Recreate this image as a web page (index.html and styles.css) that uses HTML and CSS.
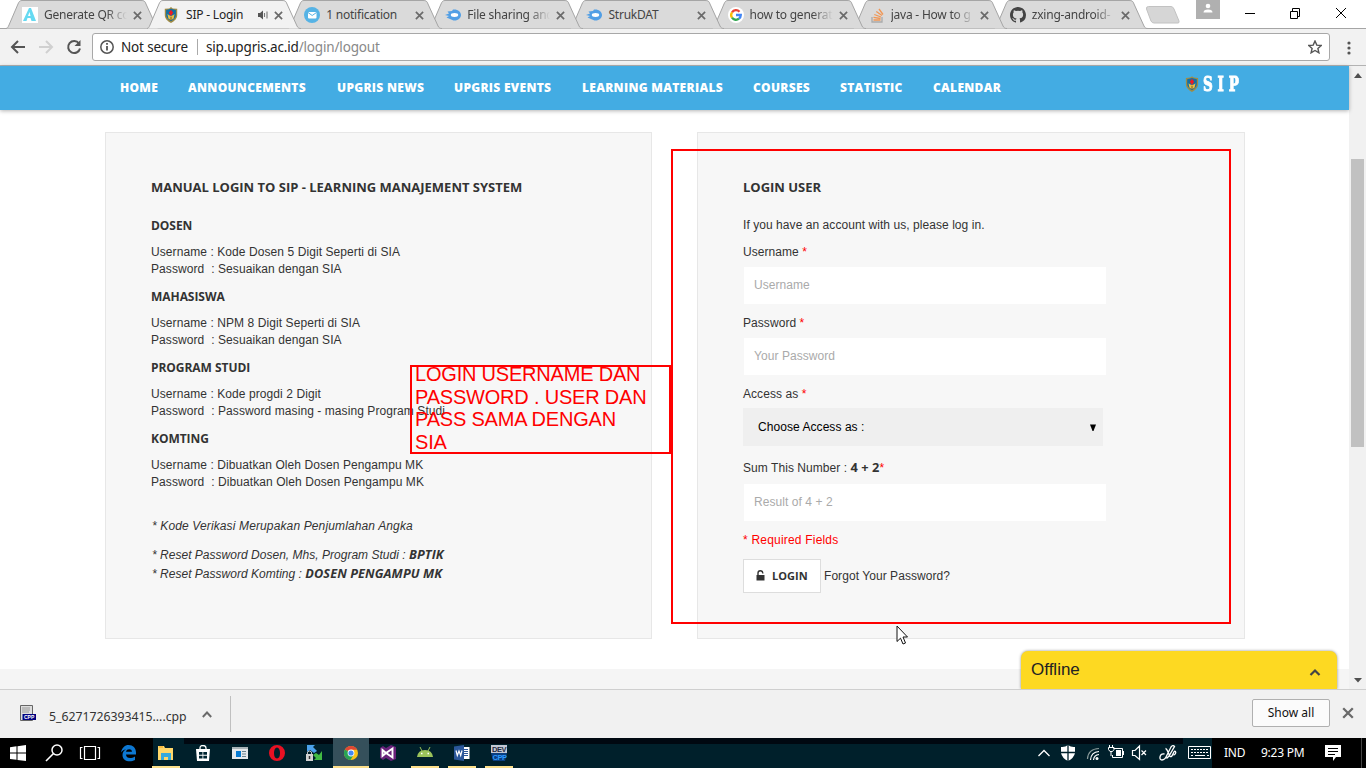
FILE: index.html
```html
<!DOCTYPE html>
<html lang="en">
<head>
<meta charset="utf-8">
<title>SIP - Login</title>
<link rel="stylesheet" href="styles.css">
</head>
<body>
<svg class="defs" width="0" height="0" aria-hidden="true">
  <defs>
    <symbol id="tabshape" viewBox="0 0 154 29"><path d="M0 28.5C2 28 2 27 3 25L12 4C13 1.5 14 .5 16 .5H135C138 .5 139 1 140 4L150 26C151 28 152 28.5 154 28.5" stroke="#a5a5a5"/></symbol>
    <symbol id="x" viewBox="0 0 10 10"><path d="M1 1L9 9M9 1L1 9" stroke="#6a6a6a" stroke-width="1.9" fill="none"/></symbol>
    <symbol id="crest" viewBox="0 0 16 18"><path d="M8 0L10 1.6 15 2V9C15 13 12 16 8 18 4 16 1 13 1 9V2L6 1.6Z" fill="#a08b45"/><path d="M8 2L13.5 3.5V9C13.500 12 11 14.500 8 16 5 14.500 2.500 12 2.500 9V3.500Z" fill="#146fa3"/><path d="M4 8Q8 12 12 8L11 13 8 15 5 13Z" fill="#e8bd45"/><path d="M8 3L10.500 6.500 8 10 5.500 6.500Z" fill="#ed1c24"/><path d="M8 11V15" stroke="#70531a"/></symbol>
    <symbol id="flame" viewBox="0 0 16 12"><path d="M0 6L4 4.500 2.500 2.500 7 2 8 .5C13 0 16 3 16 6S13 12 8.500 11.500L5 10 1.500 8.500 4 7Z" fill="#529fe5"/><ellipse cx="9.500" cy="6" rx="3.700" ry="1.900" fill="#fff"/></symbol>
  </defs>
</svg>

<header class="tabs">
  <div class="tab t1"><svg class="shape"><use href="#tabshape"/></svg>
    <svg class="fav" viewBox="0 0 16 16"><path fill="#fff" d="M0 0H16V16H0Z"/><path d="M1 14L7 1H9L14 14H9.500L8.500 11H5.500L4.500 14ZM6 9H8.500L7.500 5Z" fill="#66daf2"/></svg>
    <span class="ttl fade">Generate QR co</span><svg class="x"><use href="#x"/></svg></div>
  <div class="tab t2 active"><svg class="shape"><use href="#tabshape"/></svg>
    <svg class="fav"><use href="#crest"/></svg>
    <span class="ttl short">SIP - Login</span>
    <svg class="snd" viewBox="0 0 10 10"><path d="M0 3H2L5 .5V9.500L2 7H0Z" fill="#555"/><path d="M6.500 3V7M9 1.500V8.500" stroke="#777" stroke-width="1.100"/></svg>
    <svg class="x"><use href="#x"/></svg></div>
  <div class="tab t3"><svg class="shape"><use href="#tabshape"/></svg>
    <svg class="fav" viewBox="0 0 16 16"><circle cx="8" cy="8" r="8" fill="#56b3e5"/><rect x="4" y="5" width="8.500" height="6.500" rx="1" fill="#fff"/><path d="M4 5.500L8.200 8.500 12.500 5.500" fill="none" stroke="#56b3e5"/></svg>
    <span class="ttl">1 notification</span><svg class="x"><use href="#x"/></svg></div>
  <div class="tab t4"><svg class="shape"><use href="#tabshape"/></svg>
    <svg class="fav"><use href="#flame"/></svg>
    <span class="ttl fade">File sharing and</span><svg class="x"><use href="#x"/></svg></div>
  <div class="tab t5"><svg class="shape"><use href="#tabshape"/></svg>
    <svg class="fav"><use href="#flame"/></svg>
    <span class="ttl">StrukDAT</span><svg class="x"><use href="#x"/></svg></div>
  <div class="tab t6"><svg class="shape"><use href="#tabshape"/></svg>
    <svg class="fav" viewBox="0 0 16 16"><circle cx="8" cy="8" r="8" fill="#fff"/><g fill="none" stroke-width="2.300"><path d="M4 5.300A4.800 4.800 0 0 1 11.500 4.700" stroke="#ea4335"/><path d="M4 5.300A4.800 4.800 0 0 0 4 10.700" stroke="#fbbc05"/><path d="M4 10.700A4.800 4.800 0 0 0 11 11.700" stroke="#34a853"/><path d="M11 11.700A4.800 4.800 0 0 0 12.800 8H8" stroke="#4285f4"/></g></svg>
    <span class="ttl fade">how to generat</span><svg class="x"><use href="#x"/></svg></div>
  <div class="tab t7"><svg class="shape"><use href="#tabshape"/></svg>
    <svg class="fav" viewBox="0 0 16 16"><path d="M3 10V15H13V10" fill="none" stroke="#aaa" stroke-width="1.300"/><path d="M4.500 13H11.500M4.500 10.300L11.500 11.500M5.300 7.500L12 10M7.300 4.500L13 8.500M10 2L14 7.500" stroke="#f19654" stroke-width="1.300"/></svg>
    <span class="ttl fade">java - How to g</span><svg class="x"><use href="#x"/></svg></div>
  <div class="tab t8"><svg class="shape"><use href="#tabshape"/></svg>
    <svg class="fav" viewBox="0 0 16 16"><path fill="#444" d="M8 0C3.580 0 0 3.580 0 8c0 3.540 2.290 6.530 5.470 7.590.4.070.55-.17.55-.38v-1.490c-2.230.48-2.700-1.070-2.700-1.070-.36-.92-.89-1.170-.89-1.170-.73-.5.060-.49.060-.49.8.060 1.230.82 1.230.82.72 1.230 1.870.87 2.330.66.070-.52.280-.87.510-1.070-1.780-.2-3.640-.89-3.640-3.950 0-.87.310-1.590.82-2.150-.08-.2-.36-1.020.080-2.120 0 0 .67-.21 2.200.82a7.500 7.500 0 0 1 4 0c1.530-1.040 2.200-.82 2.200-.82.44 1.100.16 1.920.080 2.120.51.56.82 1.270.82 2.150 0 3.070-1.870 3.750-3.650 3.950.29.25.54.73.54 1.480v2.200c0 .21.150.46.550.38A8 8 0 0 0 16 8c0-4.420-3.580-8-8-8z"/></svg>
    <span class="ttl fade">zxing-android-</span><svg class="x"><use href="#x"/></svg></div>
  <svg class="newtab" viewBox="0 0 36 18"><path d="M3.500 .5H26Q28 .5 29 3L34 15Q34.500 17 33 17H9Q7 17 6 15L1.500 3Q1 .5 3.500 .5Z" fill="#d6d6d6" stroke="#c2c2c2"/></svg>
  <div class="person"><svg width="10" height="11" viewBox="0 0 10 11"><circle cx="5" cy="3" r="2.300" fill="#fff"/><path d="M.5 9.500Q.5 6.500 5 6.500T9.500 9.500Z" fill="#fff"/></svg></div>
  <svg class="winctl" width="102" height="28" fill="none" stroke="#000"><path d="M0 13.500H10M45.500 11.500H52.500V18.500H45.500ZM47.500 11V8.500H54.500V16.500H53M91 8L101 18M101 8L91 18"/></svg>
</header>

<div class="toolbar">
  <svg class="navicons" width="92" height="36" fill="none" stroke="#555" stroke-width="2"><path d="M25 18H12.500M18 12L12 18 18 24"/><path d="M39 18H51.500M46 12L52 18 46 24" stroke="#d0d0d0"/><path d="M79 14.500A6 6 0 1 0 80 19.500"/><path d="M80.500 11V17H74.500Z" fill="#555" stroke="none"/></svg>
  <div class="omnibox">
    <svg width="14" height="14" viewBox="0 0 14 14" fill="none" stroke="#555" stroke-width="1.500"><circle cx="7" cy="7" r="6.200"/><path d="M7 6V10.500M7 3V4.700" stroke-width="1.800"/></svg>
    <span class="sec">Not secure</span><i></i><span class="url">sip.upgris.ac.id<b>/login/logout</b></span>
    <svg class="star" width="14" height="14" viewBox="0 0 14 14" fill="none" stroke="#555" stroke-width="1.400"><path d="M7 1L8.800 5.100 13.200 5.500 9.900 8.400 10.900 12.800 7 10.500 3.100 12.800 4.100 8.400.8 5.500 5.200 5.100Z"/></svg>
  </div>
  <svg class="dots" width="4" height="14" fill="#555"><circle cx="2" cy="2" r="1.600"/><circle cx="2" cy="7" r="1.600"/><circle cx="2" cy="12" r="1.600"/></svg>
</div>

<div class="viewport">
  <div class="page">
    <nav class="menu">
      <a class="m1">HOME</a><a class="m2">ANNOUNCEMENTS</a><a class="m3">UPGRIS NEWS</a><a class="m4">UPGRIS EVENTS</a><a class="m5">LEARNING MATERIALS</a><a class="m6">COURSES</a><a class="m7">STATISTIC</a><a class="m8">CALENDAR</a>
      <div class="brand"><svg width="14" height="16" viewBox="0 0 16 18"><use href="#crest" width="16" height="18"/></svg><span>SIP</span></div>
    </nav>
    <main class="cols">
      <section class="panel manual">
        <h2>MANUAL LOGIN TO SIP - LEARNING MANAJEMENT SYSTEM</h2>
        <h3>DOSEN</h3>
        <p>Username : Kode Dosen 5 Digit Seperti di SIA<br>Password &nbsp;: Sesuaikan dengan SIA</p>
        <h3>MAHASISWA</h3>
        <p>Username : NPM 8 Digit Seperti di SIA<br>Password &nbsp;: Sesuaikan dengan SIA</p>
        <h3>PROGRAM STUDI</h3>
        <p>Username : Kode progdi 2 Digit<br>Password &nbsp;: Password masing - masing Program Studi</p>
        <h3>KOMTING</h3>
        <p>Username : Dibuatkan Oleh Dosen Pengampu MK<br>Password &nbsp;: Dibuatkan Oleh Dosen Pengampu MK</p>
        <div class="notes">
          <p>* Kode Verikasi Merupakan Penjumlahan Angka</p>
          <p class="reset">* Reset Password Dosen, Mhs, Program Studi : <b>BPTIK</b><br>* Reset Password Komting : <b>DOSEN PENGAMPU MK</b></p>
        </div>
      </section>
      <section class="panel login">
        <h2>LOGIN USER</h2>
        <p class="intro">If you have an account with us, please log in.</p>
        <label>Username <em>*</em></label>
        <div class="field">Username</div>
        <label>Password <em>*</em></label>
        <div class="field">Your Password</div>
        <label>Access as <em>*</em></label>
        <div class="select"><span>Choose Access as :</span><svg width="6" height="7"><path d="M0 .5H6L3.500 7H2.500Z"/></svg></div>
        <label>Sum This Number : <b>4 + 2</b><em>*</em></label>
        <div class="field">Result of 4 + 2</div>
        <p class="req">* Required Fields</p>
        <div class="act"><div class="btn"><svg width="9" height="11" viewBox="0 0 9 11"><path d="M.5 5H8.500V10.500H.5Z" fill="#333"/><path d="M2 5V3Q2 .8 4.300 .8T6.800 3V3.500" fill="none" stroke="#333" stroke-width="1.400"/></svg><span>LOGIN</span></div><span class="forgot">Forgot Your Password?</span></div>
      </section>
    </main>
    <div class="foot"></div>
    <div class="chat"><span>Offline</span><svg width="12" height="8"><path d="M1.500 7L6 2.500 10.500 7" fill="none" stroke="#444" stroke-width="2.200"/></svg></div>
  </div>
  <div class="scroll"><svg width="8" height="5"><path d="M0 5L4 0 8 5Z" fill="#505050"/></svg><div class="thumb"></div><svg width="8" height="5"><path d="M0 0H8L4 4.500Z" fill="#505050"/></svg></div>
</div>

<div class="shelf">
  <svg class="cpp" width="16" height="16"><path d="M.5 .5H12.500V15.500H.5Z" fill="#ddd" stroke="#666"/><path d="M2 3H10M2 5H10M2 7H9" stroke="#999"/><path d="M2.500 9H16V15H2.500Z" fill="#000080"/><text x="4" y="14" class="cpptext">CPP</text></svg>
  <span class="file">5_6271726393415....cpp</span>
  <svg class="up" width="10" height="7"><path d="M.8 6L5 1.500 9.200 6" fill="none" stroke="#6a6a6a" stroke-width="1.900"/></svg>
  <i></i>
  <div class="all">Show all</div>
  <svg class="x2"><use href="#x"/></svg>
</div>

<footer class="taskbar">
  <div class="start"><svg width="153" height="30" fill="none" stroke="#fff"><path fill="#fff" stroke="none" d="M10 9.200L16.500 8.300V14.500H10ZM17.500 8.200L26 7V14.500H17.500ZM10 15.500H16.500V21.800L10 20.900ZM17.500 15.500H26V23L17.500 21.900Z"/><circle cx="57" cy="12" r="5" stroke-width="1.500"/><path d="M53.500 15.500L46 23" stroke-width="1.600"/><path d="M84.500 8.500H95.500V21.500H84.500ZM82.500 9.500H80.500V20.500H82.500M97.500 9.500H99.500V20.500H97.500" stroke-width="1.200"/><path d="M121 14.500C122 9.500 125 7 128.500 7 133 7 136 10 136 14.500V16.500H126C126 20.500 131 21 135 18.500V22C130 24.500 122.500 23.500 122.500 17 122.500 14 124 12.500 126 11.500 123.500 11.500 122 13 121 14.500ZM126 13.800H132C132 10.500 126.500 10.500 126 13.800Z" fill="#0d78d3" stroke="none" fill-rule="evenodd"/></svg></div>
  <div class="apps">
    <div class="app on"><svg viewBox="0 0 16 16"><path d="M0 1H6L7 3H15V15H0Z" fill="#ffd769"/><path d="M1 2H5" stroke="#f49f16"/><path d="M3 8H13V15H10V12H6V15H3Z" fill="#35a9dd"/></svg></div>
    <div class="app"><svg viewBox="0 0 16 16"><path d="M1 4H15L14 16H2Z" fill="#fff"/><path d="M5 5V3Q5 .5 8 .5T11 3V5" fill="none" stroke="#fff" stroke-width="1.300"/><path d="M4 7H7.500V9.800H4ZM8.300 7H12V9.800H8.300ZM4 10.700H7.500V13.500H4ZM8.300 10.700H12V13.500H8.300Z" fill="#002531"/></svg></div>
    <div class="app"><svg viewBox="0 0 16 16"><path d="M0 2H16V14H0Z" fill="#e5e9eb"/><path d="M0 2H16V4H0Z" fill="#a8b2b7"/><path d="M4 6H9V12H4Z" fill="#087bd1"/><path d="M10 6.500H14M10 9H14M10 11.500H14" stroke="#69828d"/></svg></div>
    <div class="app"><svg viewBox="0 0 16 16"><path fill-rule="evenodd" fill="#e81123" d="M8 0A8 8 0 1 0 8 16 8 8 0 0 0 8 0ZM8 2.500C10 2.500 11 5 11 8S10 13.500 8 13.500 5 11 5 8 6 2.500 8 2.500Z"/></svg></div>
    <div class="app"><svg viewBox="0 0 16 16"><path d="M1 0H9L7 2 11 6 8 8 4 5 1 7Z" fill="#4ba1eb"/><path d="M16 6V15H8L10 13 7 10 10 8 13 10Z" fill="#42bb43"/><path d="M0 9H7V16H0Z" fill="#d2d2d2"/><path d="M1.500 9V7Q3.500 5 5.500 7V9" fill="none" stroke="#bbb"/><path d="M3.500 11V14" stroke="#333" stroke-width="1.500"/></svg></div>
    <div class="app on chrome"><svg viewBox="0 0 16 16"><circle cx="8" cy="8" r="7" fill="#fbc116"/><path d="M8 8L1.900 4.500A7 7 0 0 1 14.200 4.800H8Z" fill="#df4635"/><path d="M8 8L1.900 4.500A7 7 0 0 0 7.500 15L10.500 10Z" fill="#28a255"/><circle cx="8" cy="8" r="3.400" fill="#fff"/><circle cx="8" cy="8" r="2.600" fill="#4387f4"/></svg></div>
    <div class="app"><svg viewBox="0 0 16 16"><path d="M0 3L3 1 6 3 11 0 16 2V14L11 16 6 13 3 15 0 13Z" fill="#68217a"/><path d="M2.500 5L6 8 12.500 3.500V12.500L6 8 2.500 11Z" fill="none" stroke="#fff" stroke-width="1.900"/></svg></div>
    <div class="app on"><svg viewBox="0 0 16 16"><path d="M0 12Q1 5 8 5T16 12Z" fill="#9bc35a"/><path d="M3 2L5 6M13 2L11 6" stroke="#9bc35a"/><path d="M4 8.500H5.500M10.500 8.500H12" stroke="#fff" stroke-width="1.300"/></svg></div>
    <div class="app on"><svg viewBox="0 0 16 16"><path d="M8 2H15.500V14H8Z" fill="#fff"/><path d="M10 4.500H14M10 6.500H14M10 8.500H14M10 10.500H14" stroke="#2b579a"/><path d="M0 1.500L10 0V16L0 14.500Z" fill="#2b579a"/><path d="M2 5.500L3.300 10.500 5 6 6.700 10.500 8 5.500" fill="none" stroke="#fff" stroke-width="1.200"/></svg></div>
    <div class="app on"><svg viewBox="0 0 16 16"><path d="M0 0H16V8H0Z" fill="#c3c8d5"/><path d="M0 8H16L14 16H2Z" fill="#0b3f80"/><text x="1" y="7" class="devtext">DEV</text><text x="1.500" y="14.800" class="devtext blue">CPP</text></svg></div>
  </div>
  <div class="tray"><svg width="182" height="30" fill="none" stroke="#fff"><path d="M8.500 18L14 12.500 19.500 18" stroke-width="1.300"/><path d="M38 7Q41 9.500 45 9V15Q44 20 38 23 32 20 31 15V9Q35 9.500 38 7Z" fill="#fff" stroke="none"/><path d="M38 7V23M31 14.500H45" stroke="#00202b" stroke-width="1.300"/><g stroke-width="1.200"><path d="M57.500 21Q58 11 69 10.500" stroke="#899"/><path d="M60.500 22Q61 14 69 13.500M63.500 22Q64 17 69 16.500"/></g><circle cx="67" cy="20.500" r="1.500" fill="#fff" stroke="none"/><path d="M83.500 10.500H92.500V19.500H82.500V17M93.500 13V17M79.500 7V9M82.500 7V9M78.500 9.500H84V11.500L82.500 13.500H80L78.500 11.500ZM81 14V18"/><path d="M86 12H91V18H86Z" fill="#fff" stroke="none"/><path d="M102.500 12.500H105L109.500 8V21.500L105 17.500H102.500ZM111.500 12.500L116 17M116 12.500L111.500 17" stroke-width="1.200"/><path d="M134.500 16C129.500 15 128.500 22 132 22Q135 22 137 17L141 9Q143 6.500 144.500 8.500L139 18 136.500 20.500M135.500 10.500C138 11 139 20 141.500 18.500 143 17 144 12 145.500 13.500 146.500 15 144.500 17 143.500 17" stroke-width="1.300"/><path d="M158.500 8.500H180.500V20.500H158.500Z"/><path d="M161 11.500H178M161 14.500H178" stroke-dasharray="2 1"/><path d="M161 17.500H163M165 17.500H175M177 17.500H179"/></svg></div>
  <div class="clock"><span class="lang">IND</span><span class="time">9:23 PM</span><svg width="16" height="16"><path d="M0 0H16V12H11L8 16V12H0Z" fill="#fff"/><path d="M3 3.500H13M3 6.500H13M3 9.500H10" stroke="#000"/></svg></div>
</footer>

<div class="callout"><p>LOGIN USERNAME DAN<br>PASSWORD . USER DAN<br>PASS SAMA DENGAN<br>SIA</p></div>
<div class="frame"></div>
<svg class="cursor" width="13" height="20"><path d="M1 1V16.500L4.500 13.200 7 19 9.500 18 7 12H11.500Z" fill="#fff" stroke="#111"/></svg>
</body>
</html>
```
FILE: styles.css
```css
* { box-sizing: border-box; }
body { margin: 0; width: 1366px; height: 768px; overflow: hidden; display: flex; flex-direction: column; background: #fff; font: 12px "Liberation Sans", Arial, sans-serif; color: #333; white-space: nowrap; }
svg { flex: none; display: block; }
.defs { position: absolute; }
h2, h3, p { margin: 0; }

.tabs { height: 29px; display: flex; padding-left: 6px; border-bottom: 1px solid #a5a5a5; font-family: "Noto Sans", sans-serif; color: #444; letter-spacing: -.22px; }
.tab { position: relative; width: 154px; height: 29px; margin-right: -12.900px; padding: 7px 17px 0 16px; display: flex; align-items: flex-start; flex: none; }
.shape { position: absolute; left: 0; top: 0; width: 154px; height: 29px; fill: #dadada; z-index: -1; }
.t1 { z-index: 8; } .t3 { z-index: 7; } .t4 { z-index: 6; } .t5 { z-index: 5; } .t6 { z-index: 4; } .t7 { z-index: 3; } .t8 { z-index: 2; }
.active { z-index: 9; color: #222; }
.active .shape { fill: #f2f2f2; }
.fav { width: 16px; height: 16px; margin-right: 6px; }
.ttl { width: 83px; line-height: 16px; }
.ttl.short { width: 73px; padding-left: 1px; }
.fade { -webkit-mask-image: linear-gradient(90deg, #000 75%, transparent); mask-image: linear-gradient(90deg, #000 75%, transparent); }
.snd { width: 10px; height: 10px; margin-top: 3px; }
.x { width: 9px; height: 9px; margin: 4px 0 0 6px; }
.newtab { width: 36px; height: 18px; margin: 6px 0 0 10px; }
.person { width: 24px; height: 19px; background: #b0b0b0; display: flex; justify-content: center; padding-top: 3px; margin-left: 15px; }
.winctl { margin-left: 25px; }

.toolbar { height: 37px; flex: none; background: #f2f2f2; border-bottom: 1px solid #b3b3b3; display: flex; align-items: flex-start; }
.omnibox { width: 1238px; height: 28px; margin-top: 4px; border: 1px solid #a8a8a8; border-radius: 3px; background: #fff; display: flex; align-items: center; padding: 0 7px; font: 13.500px "Noto Sans", sans-serif; letter-spacing: -.17px; color: #222; }
.sec { width: 76px; margin-left: 7px; }
.omnibox i { width: 1px; height: 16px; background: #aaa; margin-right: 8px; }
.url { flex: 1; }
.url b { font-weight: 400; color: #888; }
.dots { margin: 12px 0 0 17px; }

.viewport { height: 623px; flex: none; display: flex; }
.page { position: relative; width: 1349px; display: flex; flex-direction: column; background: #fff; }
.menu { height: 44px; flex: none; background: #43ace3; box-shadow: 0 1px 4px rgba(0,0,0,.3); display: flex; gap: 30px; padding-left: 120px; font: 800 12px/43px "Open Sans", sans-serif; color: #fff; letter-spacing: .3px; }
.menu a { flex: none; }
.m1 { width: 38px; } .m2 { width: 119px; } .m3 { width: 87px; } .m4 { width: 98px; } .m5 { width: 141px; } .m6 { width: 57px; } .m7 { width: 63px; } .m8 { width: 68px; }
.brand { display: flex; align-items: flex-start; margin: 10px 0 0 154px; gap: 4px; }
.brand span { font: 700 20px/16px "DejaVu Serif", serif; letter-spacing: 7px; transform: scaleX(.68); transform-origin: left; -webkit-text-stroke: .9px #fff; }
.cols { display: flex; gap: 45px; padding: 22px 0 0 105px; }
.panel { width: 547px; height: 507px; background: #f7f7f7; border: 1px solid #e7e7e7; padding: 45px 45px 0; }
.login { width: 548px; letter-spacing: .06px; }
h2 { font: 700 13px/18px "Open Sans", sans-serif; letter-spacing: -.01px; }
.manual h2 { margin-bottom: 20px; }
h3 { font: 700 12px/19px "Open Sans", sans-serif; letter-spacing: -.05px; }
.manual p { line-height: 17px; margin: 9px 0 9px; letter-spacing: .08px; }
.manual .notes { padding-top: 17px; font-style: italic; }
.manual .notes p { line-height: 19px; margin: 0 0 10px; letter-spacing: .13px; padding-left: 1px; }
.manual .notes .reset { letter-spacing: .02px; }
b { line-height: 1; }
.notes b { font-family: "Open Sans", sans-serif; font-size: 12.700px; letter-spacing: .1px; }
.login h2 { margin-bottom: 21px; }
.intro { line-height: 17px; margin-bottom: 10px; }
label { display: block; line-height: 17px; margin-bottom: 6px; }
label b { font-family: "Open Sans", sans-serif; font-size: 12.800px; }
em { color: #f00; font-style: normal; }
.field { width: 362px; height: 37px; margin: 0 0 11px 1px; background: #fff; color: #aaa; padding-left: 10px; line-height: 36px; }
.select { width: 360px; height: 38px; margin: -1px 0 14px; background: #efefef; color: #000; display: flex; justify-content: space-between; align-items: center; padding: 0 7px 0 15px; }
.select + label { margin-bottom: 7px; }
.req { color: #f00; line-height: 17px; margin-bottom: 10px; letter-spacing: .2px; }
.act { display: flex; align-items: center; gap: 3px; }
.btn { width: 78px; height: 34px; background: #fff; border: 1px solid #ddd; display: flex; align-items: center; padding: 0 0 1px 12px; gap: 7px; font: 700 11px "Open Sans", sans-serif; }
.foot { background: #f5f5f5; height: 20px; margin-top: 30px; }
.chat { position: absolute; left: 1021px; bottom: 0; width: 316px; height: 38px; background: #fdd922; border-radius: 7px 7px 0 0; box-shadow: 0 0 3px rgba(0,0,0,.45); display: flex; justify-content: space-between; align-items: center; padding: 0 16px 0 10px; font-size: 17px; color: #222; }
.chat svg { margin-top: 3px; }
.scroll { width: 17px; background: #f1f1f1; display: flex; flex-direction: column; align-items: center; padding: 7px 0 5px; }
.thumb { width: 13px; height: 288px; margin: 81px 0 231px; background: #c1c1c1; }

.shelf { height: 49px; flex: none; position: relative; background: #f1f1f1; border-top: 1px solid #cfcfcf; display: flex; align-items: center; padding-left: 20px; font: 12.250px "Noto Sans", sans-serif; color: #333; }
.cpp { margin-top: -2px; }
.cpptext { font: 700 5px "Liberation Sans", sans-serif; fill: #fff; }
.devtext { font: 700 7.500px "Liberation Sans", sans-serif; fill: #222b40; letter-spacing: -.4px; }
.devtext.blue { fill: #2d9bff; }
.file { width: 139px; margin: 4px 14px 0 13px; }
.shelf i { width: 1px; height: 36px; background: #c0c0c0; margin-left: 18px; }
.all { width: 78px; height: 28px; margin: -2px 0 0 1021px; background: #fbfbfb; border: 1px solid #b0b0b0; border-radius: 2px; text-align: center; line-height: 25px; font-size: 12px; color: #111; }
.x2 { width: 12px; height: 12px; margin: -2px 0 0 12px; }

.taskbar { height: 30px; flex: none; display: flex; background: #000; }
.start { width: 153px; }
.apps { width: 877px; display: flex; background: linear-gradient(#000811, #000811) 31px 0 / 846px 6px no-repeat, #00202b; }
.app { width: 28px; height: 30px; margin-right: 9px; padding-top: 7px; flex: none; }
.app:first-child { margin-left: -1px; }
.app svg { width: 16px; height: 16px; margin: 0 auto; }
.on { border-bottom: 2px solid #fde08b; }
.chrome { width: 36px; margin: 0 5px 0 -4px; background: #35505b; }
.tray { width: 182px; background: linear-gradient(#000811, #000811) 0 0 / 153px 6px no-repeat, #00202b; }
.clock { width: 150px; display: flex; align-items: flex-start; padding: 7px 0 0 12px; color: #fff; font: 12px/16px "Noto Sans", sans-serif; letter-spacing: -.25px; border-right: 1px solid #444; }
.lang { width: 37px; } .time { width: 64px; }

.callout { position: absolute; left: 410px; top: 365px; width: 261px; height: 89px; border: 2px solid #f00; color: #f00; font-size: 20px; line-height: 22.700px; padding-left: 3px; letter-spacing: -.2px; }
.callout p { margin-top: -4px; }
.frame { position: absolute; left: 671px; top: 149px; width: 560px; height: 475px; border: 2px solid #f00; }
.cursor { position: absolute; left: 896px; top: 625px; }
```
